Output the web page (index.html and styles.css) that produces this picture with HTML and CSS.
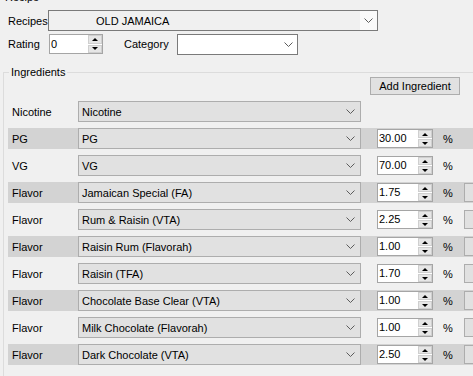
FILE: index.html
```html
<!DOCTYPE html>
<html lang="en">

<head>
    <meta charset="UTF-8">
    <meta name="viewport" content="width=device-width, initial-scale=1.0">
    <title>Recipe</title>
    <link rel="stylesheet" href="styles.css">
</head>

<body>
    <div class="recipe-group">
        <div class="recipe-title">Recipe</div>
        <div class="field-row recipes-row">
            <span class="field-label recipes-label">Recipes</span>
            <div class="combo recipe-combo">
                <span class="combo-text">OLD JAMAICA</span>
                <span class="drop-btn"><svg class="chevron" width="9" height="5" viewBox="0 0 9 5"><polyline points="0.5,0.5 4.5,4.5 8.5,0.5" /></svg></span>
            </div>
        </div>
        <div class="field-row rating-row">
            <span class="field-label rating-label">Rating</span>
            <div class="numeric rating-numeric">
                <span class="num-value">0</span>
                <span class="spin"><span class="spin-btn up"></span><span class="spin-btn down"></span></span>
            </div>
            <span class="field-label category-label">Category</span>
            <div class="combo category-combo">
                <span class="combo-text"></span>
                <svg class="chevron" width="9" height="5" viewBox="0 0 9 5"><polyline points="0.5,0.5 4.5,4.5 8.5,0.5" /></svg>
            </div>
        </div>
    </div>

    <div class="ingredients">
        <span class="group-legend">Ingredients</span>
        <div class="toolbar">
            <button class="add-btn">Add Ingredient</button>
        </div>
        <div class="ing-list">
            <div class="ing-row">
                <span class="ing-type">Nicotine</span>
                <div class="combo flat"><span class="combo-text">Nicotine</span><svg class="chevron" width="9" height="5" viewBox="0 0 9 5"><polyline points="0.5,0.5 4.5,4.5 8.5,0.5" /></svg></div>
            </div>
            <div class="ing-row shaded">
                <span class="ing-type">PG</span>
                <div class="combo flat"><span class="combo-text">PG</span><svg class="chevron" width="9" height="5" viewBox="0 0 9 5"><polyline points="0.5,0.5 4.5,4.5 8.5,0.5" /></svg></div>
                <div class="numeric"><span class="num-value">30.00</span><span class="spin"><span class="spin-btn up"></span><span class="spin-btn down"></span></span></div>
                <span class="unit">%</span>
            </div>
            <div class="ing-row">
                <span class="ing-type">VG</span>
                <div class="combo flat"><span class="combo-text">VG</span><svg class="chevron" width="9" height="5" viewBox="0 0 9 5"><polyline points="0.5,0.5 4.5,4.5 8.5,0.5" /></svg></div>
                <div class="numeric"><span class="num-value">70.00</span><span class="spin"><span class="spin-btn up"></span><span class="spin-btn down"></span></span></div>
                <span class="unit">%</span>
            </div>
            <div class="ing-row shaded">
                <span class="ing-type">Flavor</span>
                <div class="combo flat"><span class="combo-text">Jamaican Special (FA)</span><svg class="chevron" width="9" height="5" viewBox="0 0 9 5"><polyline points="0.5,0.5 4.5,4.5 8.5,0.5" /></svg></div>
                <div class="numeric"><span class="num-value">1.75</span><span class="spin"><span class="spin-btn up"></span><span class="spin-btn down"></span></span></div>
                <span class="unit">%</span>
                <span class="row-btn"></span>
            </div>
            <div class="ing-row">
                <span class="ing-type">Flavor</span>
                <div class="combo flat"><span class="combo-text">Rum &amp; Raisin (VTA)</span><svg class="chevron" width="9" height="5" viewBox="0 0 9 5"><polyline points="0.5,0.5 4.5,4.5 8.5,0.5" /></svg></div>
                <div class="numeric"><span class="num-value">2.25</span><span class="spin"><span class="spin-btn up"></span><span class="spin-btn down"></span></span></div>
                <span class="unit">%</span>
                <span class="row-btn"></span>
            </div>
            <div class="ing-row shaded">
                <span class="ing-type">Flavor</span>
                <div class="combo flat"><span class="combo-text">Raisin Rum (Flavorah)</span><svg class="chevron" width="9" height="5" viewBox="0 0 9 5"><polyline points="0.5,0.5 4.5,4.5 8.5,0.5" /></svg></div>
                <div class="numeric"><span class="num-value">1.00</span><span class="spin"><span class="spin-btn up"></span><span class="spin-btn down"></span></span></div>
                <span class="unit">%</span>
                <span class="row-btn"></span>
            </div>
            <div class="ing-row">
                <span class="ing-type">Flavor</span>
                <div class="combo flat"><span class="combo-text">Raisin (TFA)</span><svg class="chevron" width="9" height="5" viewBox="0 0 9 5"><polyline points="0.5,0.5 4.5,4.5 8.5,0.5" /></svg></div>
                <div class="numeric"><span class="num-value">1.70</span><span class="spin"><span class="spin-btn up"></span><span class="spin-btn down"></span></span></div>
                <span class="unit">%</span>
                <span class="row-btn"></span>
            </div>
            <div class="ing-row shaded">
                <span class="ing-type">Flavor</span>
                <div class="combo flat"><span class="combo-text">Chocolate Base Clear (VTA)</span><svg class="chevron" width="9" height="5" viewBox="0 0 9 5"><polyline points="0.5,0.5 4.5,4.5 8.5,0.5" /></svg></div>
                <div class="numeric"><span class="num-value">1.00</span><span class="spin"><span class="spin-btn up"></span><span class="spin-btn down"></span></span></div>
                <span class="unit">%</span>
                <span class="row-btn"></span>
            </div>
            <div class="ing-row">
                <span class="ing-type">Flavor</span>
                <div class="combo flat"><span class="combo-text">Milk Chocolate (Flavorah)</span><svg class="chevron" width="9" height="5" viewBox="0 0 9 5"><polyline points="0.5,0.5 4.5,4.5 8.5,0.5" /></svg></div>
                <div class="numeric"><span class="num-value">1.00</span><span class="spin"><span class="spin-btn up"></span><span class="spin-btn down"></span></span></div>
                <span class="unit">%</span>
                <span class="row-btn"></span>
            </div>
            <div class="ing-row shaded">
                <span class="ing-type">Flavor</span>
                <div class="combo flat"><span class="combo-text">Dark Chocolate (VTA)</span><svg class="chevron" width="9" height="5" viewBox="0 0 9 5"><polyline points="0.5,0.5 4.5,4.5 8.5,0.5" /></svg></div>
                <div class="numeric"><span class="num-value">2.50</span><span class="spin"><span class="spin-btn up"></span><span class="spin-btn down"></span></span></div>
                <span class="unit">%</span>
                <span class="row-btn"></span>
            </div>
        </div>
    </div>
</body>

</html>
```

FILE: styles.css
```css
* {
    box-sizing: border-box;
}

body {
    margin: 0;
    width: 473px;
    height: 376px;
    overflow: hidden;
    background-color: #f0f0f0;
    font-family: "Liberation Sans", Arial, sans-serif;
    font-size: 11px;
    color: #000;
}

/* recipe header */
.recipe-title {
    margin: -9px 0 0 5px;
    line-height: 13px;
}

.field-row {
    display: flex;
    align-items: center;
    padding-left: 8px;
}

.recipes-row {
    margin-top: 6px;
    height: 21px;
}

.rating-row {
    margin-top: 3px;
    height: 21px;
    align-items: flex-start;
}

.rating-row .field-label {
    line-height: 20px;
}

.recipes-label {
    width: 40px;
}

.rating-label {
    width: 41px;
}

.category-label {
    width: 53px;
    margin-left: 21px;
}

.combo {
    display: flex;
    align-items: center;
    justify-content: space-between;
    height: 21px;
    white-space: nowrap;
}

.recipe-combo {
    width: 330px;
    border: 1px solid #7a7a7a;
    background-color: #f0f0f0;
    padding-left: 47px;
}

.drop-btn {
    display: flex;
    align-items: center;
    justify-content: center;
    width: 17px;
    height: 100%;
    background-color: #fafafa;
}

.category-combo {
    width: 121px;
    border: 1px solid #7a7a7a;
    background-color: #fff;
    padding: 0 4px 0 3px;
}

.chevron {
    display: block;
    flex-shrink: 0;
}

.chevron polyline {
    fill: none;
    stroke: #5c5c5c;
    stroke-width: 1;
}

/* numeric up/down */
.numeric {
    display: flex;
    width: 56px;
    height: 19px;
    border: 1px solid #a5a5a5;
    background-color: #fff;
}

.rating-numeric {
    width: 54px;
    height: 20px;
}

.num-value {
    flex: 1;
    padding-left: 1px;
    line-height: 17px;
}

.rating-numeric .num-value {
    line-height: 18px;
}

.spin {
    display: flex;
    flex-direction: column;
    width: 14px;
    gap: 1px;
}

.spin-btn {
    flex: 1;
    display: flex;
    align-items: center;
    justify-content: center;
    background-color: #e6e6e6;
    border: 1px solid #cfcfcf;
}

.spin-btn::before {
    content: "";
    border-left: 3px solid transparent;
    border-right: 3px solid transparent;
}

.spin-btn.up::before {
    border-bottom: 3px solid #000;
}

.spin-btn.down::before {
    border-top: 3px solid #000;
}

/* ingredients group */
.ingredients {
    position: relative;
    margin: 17px 0 0 3px;
    height: 320px;
    border-top: 1px solid #dcdcdc;
    border-left: 1px solid #dcdcdc;
}

.group-legend {
    position: absolute;
    top: -7px;
    left: 5px;
    padding: 0 2px;
    line-height: 13px;
    background-color: #f0f0f0;
}

.toolbar {
    display: flex;
    justify-content: flex-end;
    padding: 4px 13px 0 0;
}

.add-btn {
    width: 90px;
    height: 18px;
    padding: 0;
    border: 1px solid #adadad;
    background-color: #e1e1e1;
    font-family: inherit;
    font-size: 11px;
    color: #000;
}

.ing-list {
    display: flex;
    flex-direction: column;
    gap: 6px;
    margin-top: 6px;
    padding-left: 4px;
}

.ing-row {
    display: flex;
    align-items: center;
    height: 21px;
}

.ing-row > * {
    flex-shrink: 0;
}

.ing-row.shaded {
    background-color: #d3d3d3;
}

.ing-type {
    width: 70px;
    padding-left: 4px;
}

.combo.flat {
    width: 283px;
    border: 1px solid #adadad;
    background-color: #e1e1e1;
    padding: 0 5px 0 3px;
}

.ing-row .numeric {
    margin-left: 16px;
}

.unit {
    width: 21px;
    margin-left: 10px;
}

.row-btn {
    width: 20px;
    height: 19px;
    border: 1px solid #adadad;
    background-color: #e1e1e1;
}
```
